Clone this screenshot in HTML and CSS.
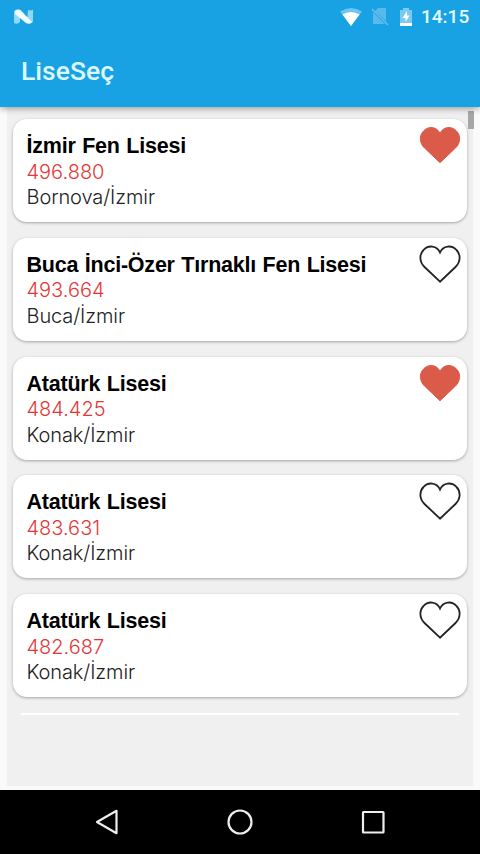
FILE: index.html
```html
<!DOCTYPE html>
<html lang="tr">
<head>
<meta charset="utf-8">
<title>LiseSeç</title>
<link rel="stylesheet" href="styles.css">
</head>
<body>
<svg width="0" height="0" class="defs"><defs><symbol id="heart" viewBox="0 0 42 38"><path d="M21 36.700 L5.500 22 C.3 17 .1 9.500 4.500 5 C9-.2 18 .3 21 7.500 C24 .3 33-.2 37.500 5 C41.900 9.500 41.700 17 36.500 22 Z"/></symbol></defs></svg>
<header class="header">
  <div class="status">
    <svg class="logo" width="20" height="16" viewBox="0 0 20 16"><path fill="#8fd8f7" d="M0 2Q3-.5 6 2V13Q3 16 0 14ZM14 1Q17 2 19 .5V13Q16 16 13 13.500Z"/><path fill="#f2fdff" d="M1 2Q4-.5 7 1.500L18 13Q15 16 12 14L1 5Z"/></svg>
    <svg width="22" height="18" viewBox="0 0 22 18"><path fill="#6dc5ef" d="M0 3.500Q11-3.500 22 3.500L11 18Z"/><path fill="#fff" d="M2.500 6.500Q11 1.500 19.500 6.500L11 18Z"/></svg>
    <svg class="sim" width="18" height="18" viewBox="0 0 18 18"><path fill="#58b9ea" d="M7 0H15V13L4 3ZM2 4L14 16H2Z"/><path d="M1 1L17 17" stroke="#69c0ec" stroke-width="1.300"/></svg>
    <svg class="battery" width="14" height="18" viewBox="0 0 14 18"><path fill="#7bcaf0" d="M4 0H10V2H13V15H1V2H4Z"/><path fill="#fff" d="M1 15H13V18H1ZM8 3L3.500 10H6.500V14L10.500 7.500H8Z"/></svg>
    <span class="clock">14:15</span>
  </div>
  <h1 class="title">LiseSeç</h1>
</header>
<main class="content">
  <div class="list">
    <article class="card"><div><h2>İzmir Fen Lisesi</h2><p class="score">496.880</p><p>Bornova/İzmir</p></div><svg class="heart liked"><use href="#heart"/></svg></article>
    <article class="card"><div><h2>Buca İnci-Özer Tırnaklı Fen Lisesi</h2><p class="score">493.664</p><p>Buca/İzmir</p></div><svg class="heart"><use href="#heart"/></svg></article>
    <article class="card"><div><h2>Atatürk Lisesi</h2><p class="score">484.425</p><p>Konak/İzmir</p></div><svg class="heart liked"><use href="#heart"/></svg></article>
    <article class="card"><div><h2>Atatürk Lisesi</h2><p class="score">483.631</p><p>Konak/İzmir</p></div><svg class="heart"><use href="#heart"/></svg></article>
    <article class="card"><div><h2>Atatürk Lisesi</h2><p class="score">482.687</p><p>Konak/İzmir</p></div><svg class="heart"><use href="#heart"/></svg></article>
    <div class="next"></div>
  </div>
  <div class="scrollbar"></div>
</main>
<nav class="nav">
  <svg width="26" height="28" viewBox="0 0 26 28"><path d="M3 14L22.500 2.800V25.200Z"/></svg>
  <svg width="26" height="28" viewBox="0 0 26 28"><circle cx="13" cy="14" r="11.500"/></svg>
  <svg width="26" height="28" viewBox="0 0 26 28"><rect x="3" y="4" width="20.500" height="20.500" rx=".5"/></svg>
</nav>
</body>
</html>
```
FILE: styles.css
```css
* { box-sizing: border-box; margin: 0; padding: 0; }
body { width: 480px; height: 854px; overflow: hidden; display: flex; flex-direction: column; background: #fafafa; font-family: "Liberation Sans", sans-serif; }
.defs { position: absolute; }
.header { height: 107px; flex: none; position: relative; z-index: 1; background: #18a2e3; box-shadow: 0 2px 6px rgba(0,0,0,.32); font-family: Roboto, sans-serif; }
.status { display: flex; align-items: center; height: 33px; padding: 0 10px 0 14px; }
.logo { margin-right: auto; }
.sim { margin-left: 9px; }
.battery { margin-left: 10px; }
.clock { width: 49px; margin-left: 8px; font-size: 19px; font-weight: 500; line-height: 33px; color: #e6faff; white-space: nowrap; }
.title { padding-left: 21px; font-size: 26.5px; line-height: 32px; margin-top: 22px; font-weight: 500; color: #dcf8ff; }
.content { flex: 1; position: relative; padding: 0 7px 4px; }
.list { height: 100%; padding: 12px 6px 0; background: #f0f0f0; display: flex; flex-direction: column; gap: 15.75px; }
.card { height: 103px; flex: none; display: flex; justify-content: space-between; padding: 15px 6px 0 13.5px; background: #fff; border-radius: 14px; box-shadow: 0 1px 3px rgba(0,0,0,.32); }
.card h2 { font-size: 21.5px; line-height: 25.5px; font-weight: 700; letter-spacing: -.22px; word-spacing: .8px; color: #000; white-space: nowrap; }
.card p { font-family: Inter, "Liberation Sans", sans-serif; font-size: 20px; font-weight: 300; line-height: 25.5px; letter-spacing: -.1px; color: #222; }
.card .score { color: #e33737; letter-spacing: 0; }
.heart { width: 42px; height: 38px; flex: none; margin-top: -8px; fill: none; stroke: #222; stroke-width: 1.8; }
.heart.liked { fill: #db5b4a; stroke: #db5b4a; stroke-width: 1; }
.next { height: 2px; margin: 0 8px; background: #fff; }
.scrollbar { position: absolute; top: 4px; right: 6px; width: 6px; height: 18px; background: #a6a6a6; }
.nav { height: 64px; flex: none; background: #000; display: flex; justify-content: center; align-items: center; gap: 107px; }
.nav svg { fill: none; stroke: #eee; stroke-width: 2.2; stroke-linejoin: round; }
```
